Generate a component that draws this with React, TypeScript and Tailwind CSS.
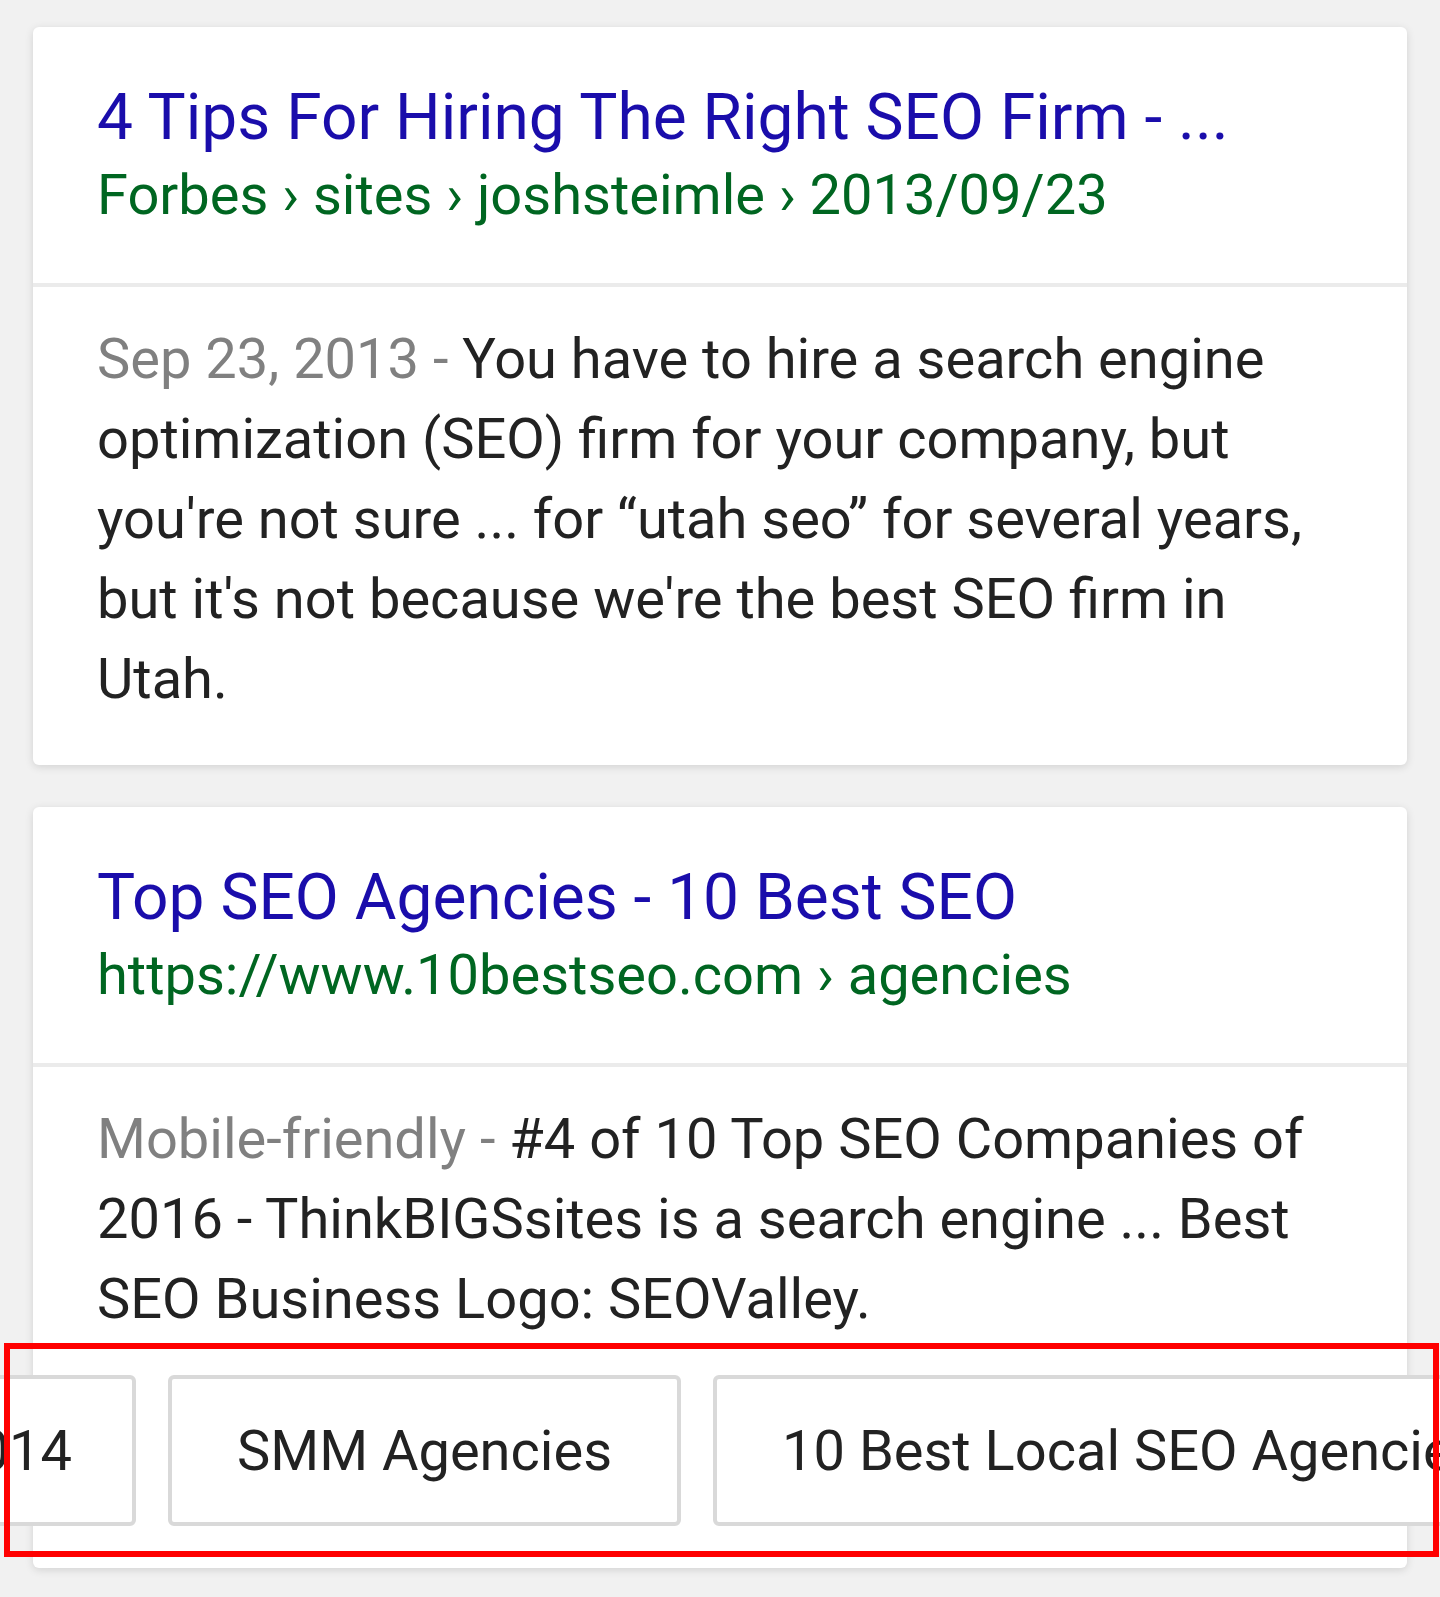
import React from "react";

function Card({
  title,
  url,
  meta,
  body,
}: {
  title: string;
  url: React.ReactNode;
  meta: string;
  body: string;
}) {
  return (
    <div className="mx-[33px] rounded-[6px] bg-white shadow-[0_2px_8px_rgba(0,0,0,0.13)]">
      <div className="px-[64px] pt-[53px] pb-[49px]">
        <div className="whitespace-nowrap text-[64px] leading-[76px] text-[#1a0dab]">{title}</div>
        <div className="whitespace-nowrap text-[56px] leading-[78px] text-[#006621]">{url}</div>
      </div>
      <div className="h-[4px] bg-[#ebebeb]" />
      <div className="pl-[64px] pr-[64px] pt-[32px] pb-[46px] text-[56px] leading-[80px] text-[#222222]">
        <span className="text-[#808080]">{meta} - </span>
        {body}
      </div>
    </div>
  );
}

function Chip({ label, first }: { label: string; first?: boolean }) {
  return (
    <div
      className={
        first
          ? "flex h-[151px] shrink-0 items-center whitespace-nowrap rounded-[6px] border-[4px] border-[#d9d9d9] bg-white pl-[65px] pr-[60px] text-[56px] leading-[64px] text-[#222222]"
          : "flex h-[151px] shrink-0 items-center whitespace-nowrap rounded-[6px] border-[4px] border-[#d9d9d9] bg-white px-[65px] text-[56px] leading-[64px] text-[#222222]"
      }
    >
      {label}
    </div>
  );
}

export default function App() {
  return (
    <div className="relative min-h-[1597px] w-[1440px] bg-[#f1f1f1] pt-[27px] pb-[29px] font-['Roboto',sans-serif]">
      <div className="flex flex-col gap-[42px]">
        <Card
          title="4 Tips For Hiring The Right SEO Firm - ..."
          url={<>Forbes › sites › joshsteimle › 2013/09/23</>}
          meta="Sep 23, 2013"
          body={"You have to hire a search engine optimization (SEO) firm for your company, but you're not sure ... for \u201cutah seo\u201d for several years, but it's not because we're the best SEO firm in Utah."}
        />
        <div className="mx-[33px] rounded-[6px] bg-white shadow-[0_2px_8px_rgba(0,0,0,0.13)]">
          <div className="px-[64px] pt-[53px] pb-[49px]">
            <div className="whitespace-nowrap text-[64px] leading-[76px] text-[#1a0dab]">Top SEO Agencies - 10 Best SEO</div>
            <div className="whitespace-nowrap text-[56px] leading-[78px] text-[#006621]">https://www.10bestseo.com › agencies</div>
          </div>
          <div className="h-[4px] bg-[#ebebeb]" />
          <div className="pl-[64px] pr-[64px] pt-[32px] text-[56px] leading-[80px] text-[#222222]">
            <span className="text-[#808080]">Mobile-friendly - </span>
            #4 of 10 Top SEO Companies of 2016 - ThinkBIGSsites is a search engine ... Best SEO Business Logo: SEOValley.
          </div>
          <div className="-mx-[33px] flex gap-[32px] overflow-hidden pt-[36px] pb-[42px]">
            <div className="flex w-[136px] shrink-0 justify-end overflow-hidden">
              <Chip label="Best SEO Companies 2014" first />
            </div>
            <Chip label="SMM Agencies" />
            <Chip label="10 Best Local SEO Agencies" />
          </div>
        </div>
      </div>
      <div className="pointer-events-none absolute left-[4px] top-[1343px] h-[214px] w-[1435px] border-[6px] border-[#ff0000]" />
    </div>
  );
}
